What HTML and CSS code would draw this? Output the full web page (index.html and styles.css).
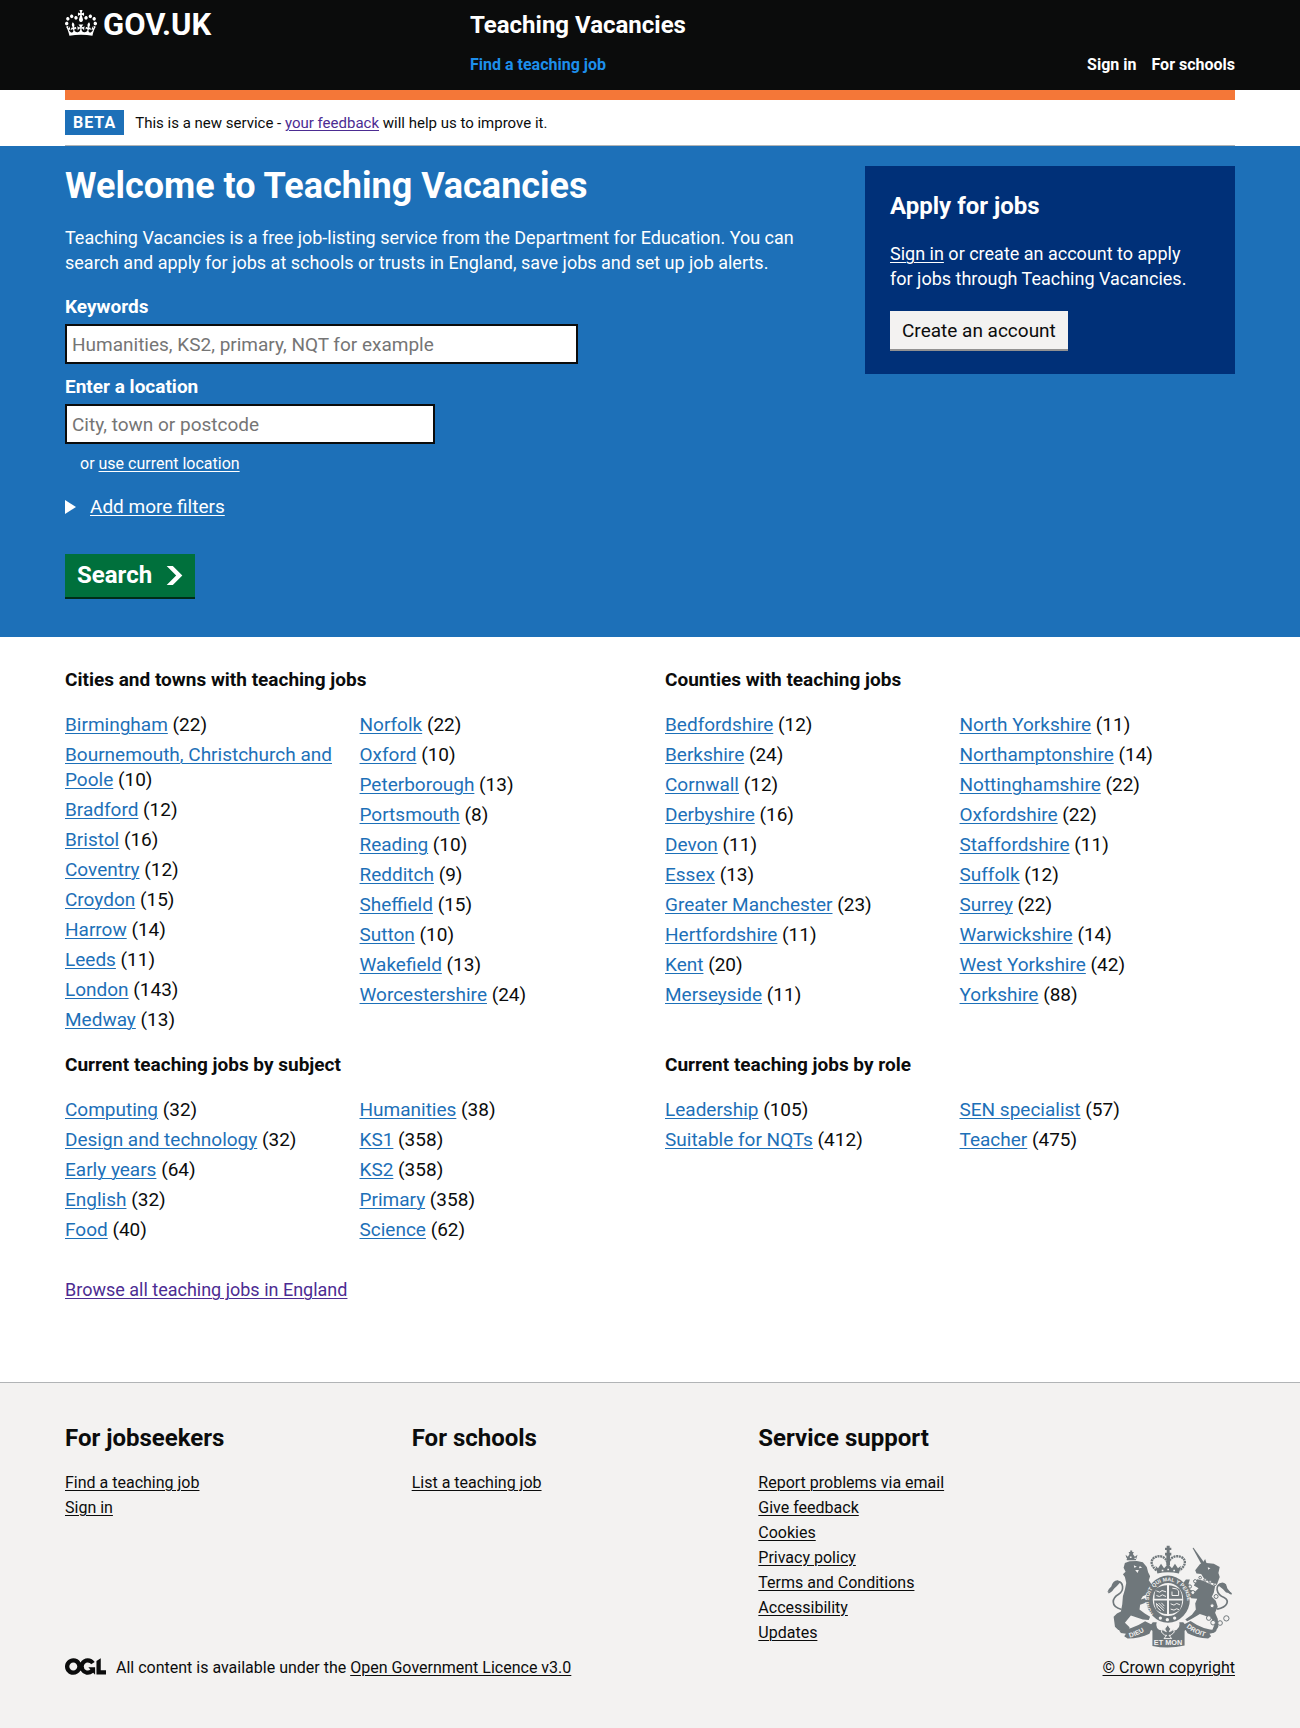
FILE: index.html
```html
<!DOCTYPE html>
<html lang="en">
<head>
<meta charset="utf-8">
<meta name="viewport" content="width=device-width, initial-scale=1">
<title>Teaching Vacancies</title>
<link rel="stylesheet" href="styles.css">
</head>
<body>
<header class="header">
  <div class="container header-grid">
    <a class="logo" href="#">
      <svg class="crown" viewBox="0 0 132 97" width="32" height="26" preserveAspectRatio="none" aria-hidden="true"><path fill="currentColor" fill-rule="evenodd" d="M25 30.2c3.5 1.5 7.7-.2 9.1-3.7 1.5-3.6-.2-7.8-3.9-9.2-3.6-1.4-7.6.3-9.1 3.9-1.4 3.5.3 7.5 3.9 9zM9 39.5c3.6 1.5 7.8-.2 9.2-3.7 1.5-3.6-.2-7.8-3.9-9.1-3.6-1.5-7.6.2-9.1 3.8-1.4 3.5.3 7.5 3.8 9zM4.4 57.2c3.5 1.5 7.7-.2 9.1-3.8 1.5-3.6-.2-7.7-3.9-9.1-3.5-1.5-7.6.3-9.1 3.8-1.4 3.5.3 7.6 3.9 9.1zm38.3-21.4c3.5 1.5 7.7-.2 9.1-3.8 1.5-3.6-.2-7.7-3.9-9.1-3.6-1.5-7.6.3-9.1 3.8-1.3 3.6.4 7.7 3.9 9.1zm64.4-5.6c-3.6 1.5-7.8-.2-9.1-3.7-1.5-3.6.2-7.8 3.8-9.2 3.6-1.4 7.7.3 9.2 3.9 1.3 3.5-.4 7.5-3.9 9zm15.9 9.3c-3.6 1.5-7.7-.2-9.1-3.7-1.5-3.6.2-7.8 3.7-9.1 3.6-1.5 7.7.2 9.2 3.8 1.5 3.5-.3 7.5-3.8 9zm4.7 17.7c-3.6 1.5-7.8-.2-9.2-3.8-1.5-3.6.2-7.7 3.9-9.1 3.6-1.5 7.7.3 9.2 3.8 1.3 3.5-.4 7.6-3.9 9.1zM89.3 35.8c-3.6 1.5-7.8-.2-9.2-3.8-1.4-3.6.2-7.7 3.9-9.1 3.6-1.5 7.7.3 9.2 3.8 1.4 3.6-.3 7.7-3.9 9.1zM69.7 17.7l8.9 4.7V9.3l-8.9 2.8c-.2-.3-.5-.6-.9-.9L72.4 0H59.6l3.5 11.2c-.3.3-.6.5-.9.9l-8.8-2.8v13.1l8.8-4.7c.3.3.6.7.9.9l-5 15.4v.1c-.2.8-.4 1.6-.4 2.4 0 4.1 3.1 7.5 7 8.1h.2c.3 0 .7.1 1 .1.4 0 .7 0 1-.1h.2c4-.6 7.1-4.1 7.1-8.1 0-.8-.1-1.7-.4-2.4V34l-5.1-15.4c.4-.2.7-.6 1-.9zM66 92.8c16.9 0 32.8 1.1 47.1 3.2 4-16.9 8.9-26.7 14-33.5l-9.6-3.4c1 4.9 1.1 7.2 0 10.2-1.5-1.4-3-4.3-4.2-8.7L108.6 76c2.8-2 5-3.2 7.5-3.3-4.4 9.4-10 11.9-13.6 11.2-4.3-.8-6.3-4.6-5.6-7.9 1-4.7 5.7-5.9 8-.5 4.3-8.7-3-11.4-7.6-8.8 7.1-7.2 7.9-13.5 2.1-21.1-8 6.1-8.1 12.3-4.5 20.8-4.7-5.4-12.1-2.5-9.5 6.2 3.4-5.2 7.9-2 7.2 3.1-.6 4.3-6.4 7.8-13.5 7.2-10.3-.9-10.9-8-11.2-13.8 2.5-.5 7.1 1.8 11 7.3L80.2 60c-4.1 4.4-8 5.3-12.3 5.4 1.4-4.4 8-11.6 8-11.6H55.5s6.4 7.2 7.9 11.6c-4.2-.1-8-1-12.3-5.4l1.4 16.4c3.9-5.5 8.5-7.7 10.9-7.3-.3 5.8-.9 12.8-11.1 13.8-7.2.6-12.9-2.9-13.5-7.2-.7-5 3.8-8.3 7.1-3.1 2.7-8.7-4.6-11.6-9.4-6.2 3.7-8.5 3.6-14.7-4.6-20.8-5.8 7.6-5 13.9 2.2 21.1-4.7-2.6-11.9.1-7.7 8.8 2.3-5.5 7.1-4.2 8.1.5.7 3.3-1.3 7.1-5.7 7.9-3.5.7-9-1.8-13.5-11.2 2.5.1 4.7 1.3 7.5 3.3l-4.7-15.4c-1.2 4.4-2.7 7.2-4.3 8.7-1.1-3-.9-5.3 0-10.2l-9.5 3.4c5 6.9 9.9 16.7 14 33.5 14.8-2.1 30.8-3.2 47.7-3.2z"/></svg>
      <span>GOV.UK</span>
    </a>
    <div class="header-content">
      <a class="service-name" href="#">Teaching Vacancies</a>
      <nav class="header-nav" aria-label="Main">
        <a class="nav-link nav-link-active" href="#">Find a teaching job</a>
        <a class="nav-link" href="#">Sign in</a>
        <a class="nav-link" href="#">For schools</a>
      </nav>
    </div>
  </div>
</header>

<div class="container">
  <div class="phase-banner">
    <strong class="phase-tag">BETA</strong>
    <span class="phase-text">This is a new service - <a class="visited" href="#">your feedback</a> will help us to improve it.</span>
  </div>
</div>

<main>
  <section class="hero">
    <div class="container hero-grid">
      <div class="hero-main">
        <h1>Welcome to Teaching Vacancies</h1>
        <p class="intro">Teaching Vacancies is a free job-listing service from the Department for Education. You can search and apply for jobs at schools or trusts in England, save jobs and set up job alerts.</p>
        <form class="search-form">
          <label for="keyword">Keywords</label>
          <input class="input input-wide" id="keyword" type="text" placeholder="Humanities, KS2, primary, NQT for example">
          <label for="location">Enter a location</label>
          <input class="input" id="location" type="text" placeholder="City, town or postcode">
          <p class="current-location">or <a href="#">use current location</a></p>
          <details class="filters">
            <summary><span>Add more filters</span></summary>
          </details>
          <button class="search-button" type="submit">Search
            <svg width="17" height="19" viewBox="0 0 33 40" aria-hidden="true"><path fill="currentColor" d="M0 0h13l20 20-20 20H0l20-20z"/></svg>
          </button>
        </form>
      </div>
      <aside class="account">
        <h2 class="heading-m">Apply for jobs</h2>
        <p><a href="#">Sign in</a> or create an account to apply for jobs through Teaching Vacancies.</p>
        <button class="secondary-button" type="button">Create an account</button>
      </aside>
    </div>
  </section>

  <div class="container listings">
    <section>
      <h2>Cities and towns with teaching jobs</h2>
      <ul class="links">
        <li><a href="#">Birmingham</a> (22)</li>
        <li><a href="#">Bournemouth, Christchurch and Poole</a> (10)</li>
        <li><a href="#">Bradford</a> (12)</li>
        <li><a href="#">Bristol</a> (16)</li>
        <li><a href="#">Coventry</a> (12)</li>
        <li><a href="#">Croydon</a> (15)</li>
        <li><a href="#">Harrow</a> (14)</li>
        <li><a href="#">Leeds</a> (11)</li>
        <li><a href="#">London</a> (143)</li>
        <li><a href="#">Medway</a> (13)</li>
        <li><a href="#">Norfolk</a> (22)</li>
        <li><a href="#">Oxford</a> (10)</li>
        <li><a href="#">Peterborough</a> (13)</li>
        <li><a href="#">Portsmouth</a> (8)</li>
        <li><a href="#">Reading</a> (10)</li>
        <li><a href="#">Redditch</a> (9)</li>
        <li><a href="#">Sheffield</a> (15)</li>
        <li><a href="#">Sutton</a> (10)</li>
        <li><a href="#">Wakefield</a> (13)</li>
        <li><a href="#">Worcestershire</a> (24)</li>
      </ul>
    </section>
    <section>
      <h2>Counties with teaching jobs</h2>
      <ul class="links">
        <li><a href="#">Bedfordshire</a> (12)</li>
        <li><a href="#">Berkshire</a> (24)</li>
        <li><a href="#">Cornwall</a> (12)</li>
        <li><a href="#">Derbyshire</a> (16)</li>
        <li><a href="#">Devon</a> (11)</li>
        <li><a href="#">Essex</a> (13)</li>
        <li><a href="#">Greater Manchester</a> (23)</li>
        <li><a href="#">Hertfordshire</a> (11)</li>
        <li><a href="#">Kent</a> (20)</li>
        <li><a href="#">Merseyside</a> (11)</li>
        <li><a href="#">North Yorkshire</a> (11)</li>
        <li><a href="#">Northamptonshire</a> (14)</li>
        <li><a href="#">Nottinghamshire</a> (22)</li>
        <li><a href="#">Oxfordshire</a> (22)</li>
        <li><a href="#">Staffordshire</a> (11)</li>
        <li><a href="#">Suffolk</a> (12)</li>
        <li><a href="#">Surrey</a> (22)</li>
        <li><a href="#">Warwickshire</a> (14)</li>
        <li><a href="#">West Yorkshire</a> (42)</li>
        <li><a href="#">Yorkshire</a> (88)</li>
      </ul>
    </section>
    <section>
      <h2>Current teaching jobs by subject</h2>
      <ul class="links">
        <li><a href="#">Computing</a> (32)</li>
        <li><a href="#">Design and technology</a> (32)</li>
        <li><a href="#">Early years</a> (64)</li>
        <li><a href="#">English</a> (32)</li>
        <li><a href="#">Food</a> (40)</li>
        <li><a href="#">Humanities</a> (38)</li>
        <li><a href="#">KS1</a> (358)</li>
        <li><a href="#">KS2</a> (358)</li>
        <li><a href="#">Primary</a> (358)</li>
        <li><a href="#">Science</a> (62)</li>
      </ul>
    </section>
    <section>
      <h2>Current teaching jobs by role</h2>
      <ul class="links">
        <li><a href="#">Leadership</a> (105)</li>
        <li><a href="#">Suitable for NQTs</a> (412)</li>
        <li><a href="#">SEN specialist</a> (57)</li>
        <li><a href="#">Teacher</a> (475)</li>
      </ul>
    </section>
  </div>
  <p class="container browse"><a class="visited" href="#">Browse all teaching jobs in England</a></p>
</main>

<footer class="footer">
  <div class="container footer-meta">
    <div class="footer-main">
      <nav class="footer-nav" aria-label="Footer">
        <div>
          <h2 class="heading-m">For jobseekers</h2>
          <ul>
            <li><a href="#">Find a teaching job</a></li>
            <li><a href="#">Sign in</a></li>
          </ul>
        </div>
        <div>
          <h2 class="heading-m">For schools</h2>
          <ul>
            <li><a href="#">List a teaching job</a></li>
          </ul>
        </div>
        <div>
          <h2 class="heading-m">Service support</h2>
          <ul>
            <li><a href="#">Report problems via email</a></li>
            <li><a href="#">Give feedback</a></li>
            <li><a href="#">Cookies</a></li>
            <li><a href="#">Privacy policy</a></li>
            <li><a href="#">Terms and Conditions</a></li>
            <li><a href="#">Accessibility</a></li>
            <li><a href="#">Updates</a></li>
          </ul>
        </div>
      </nav>
      <div class="licence">
        <svg width="41" height="17" viewBox="0 0 483.2 195.7" aria-hidden="true"><path fill="currentColor" d="M421.5 142.8V.1l-50.7 32.3v161.1h112.4v-50.7zm-122.3-9.6A47.12 47.12 0 0 1 221 97.8c0-26 21.1-47.1 47.1-47.1 16.7 0 31.4 8.7 39.7 21.8l42.7-27.2A97.63 97.63 0 0 0 268.1 0c-36.5 0-68.3 20.1-85.1 49.7A98 98 0 0 0 97.8 0C43.9 0 0 43.9 0 97.8s43.9 97.8 97.8 97.8c36.5 0 68.3-20.1 85.1-49.7a97.76 97.76 0 0 0 149.6 25.4l19.4 22.2h3v-87.8h-80l24.3 27.5zM97.8 145c-26 0-47.1-21.1-47.1-47.1s21.1-47.1 47.1-47.1 47.1 21.1 47.1 47.1S123.8 145 97.8 145"/></svg>
        <span>All content is available under the <a href="#">Open Government Licence v3.0</a></span>
      </div>
    </div>
    <a class="copyright" href="#">
      <svg class="crest" viewBox="50 46 377 310" width="125" height="103" aria-hidden="true">
        <defs>
          <path id="garter" d="M190 254A58 60 0 1 1 278 254"/>
          <path id="scroll-left" d="M119 325Q146 318 176 297"/>
          <path id="scroll-right" d="M289 294Q318 318 362 326"/>
        </defs>
        <g fill="#6f777b">
          <!-- central crown -->
          <path d="M230 48h9v6h5v7h-5v8h5v8h-19v-8h5v-8h-5v-7h5z"/>
          <path fill="none" stroke="#6f777b" stroke-width="7" stroke-dasharray="6 2" d="M199 122C170 98 190 76 213 80Q229 84 234 104Q240 84 256 80C280 76 300 98 269 122"/>
          <path d="M229 76h11v31h-11zM196 108l8 8 9-14 9 14 12-13 12 13 9-14 9 14 9-8-6 24q-34-9-65 0z"/>
          <!-- garter ring and quartered shield -->
          <path fill-rule="evenodd" d="M234 138A66 71 0 1 0 234 280A66 71 0 1 0 234 138M234 160A46 50 0 1 1 234 260A46 50 0 1 1 234 160"/>
          <path d="M197 178q16-11 34-11v41h-38q0-16 4-30zM237 167q20 2 33 13 6 12 7 28h-40zM237 213h40q-1 15-7 28-13 12-33 13zM192 213h39v41q-19-1-33-13-6-12-6-28z"/>
          <!-- lion -->
          <path d="M106 75l7 6 5-8-3-6h5v-5h6v5h5l-3 6 6 8 8-6-5 17h-27z"/>
          <path d="M104 100L118 95L140 94L158 98L170 112L174 128L180 140L176 152L184 164L176 176L178 188L168 196L158 200L152 210L164 206L176 214L178 222L166 220L150 226L148 240L164 252L180 262L176 272L158 270L140 264L122 258L112 270L104 280L118 294L116 303L84 302L74 292L70 262L80 252L92 246L96 224L98 200L104 180L108 160L104 142L98 134L106 126L100 114Z"/>
          <path fill="none" stroke="#6f777b" stroke-width="5" d="M94 240C58 230 66 205 85 194C103 184 100 156 82 156C67 158 78 180 54 190"/>
          <path d="M51 188q4-11 12-17 4-18 19-19l9 5-11 12-14 13z"/>
          <!-- unicorn -->
          <path d="M308 55l3-1 33 46-8 6z"/>
          <path d="M316 122L330 104L340 98L346 88L350 100L372 102L390 112L386 130L390 142L382 164L360 158L342 146L334 133L320 132Z"/>
          <path d="M322 149L338 153L376 170L372 190L366 202L378 214L384 232L376 250L384 268L386 292L376 308L366 306L374 286L366 268L344 258L330 254L310 266L292 276L286 270L306 256L318 240L316 222L322 208L304 206L290 192L284 176L280 160L288 150L300 150L296 162L300 180L316 186L326 176L312 168Z"/>
          <path fill="none" stroke="#6f777b" stroke-width="5" d="M382 239C415 232 420 213 403 204C378 194 374 164 397 163C414 164 402 186 426 193"/>
          <path d="M384 166q13-14 25-2l4 13 12 14-16-2-9-10z"/>
          <!-- motto scrolls -->
          <path d="M86 303q40-2 79-27l24 12-11 25q-27 13-66 15l-10-7 5-8-15-2zM381 303q-41-1-79-28l-23 12 14 25q27 14 62 16l9-7-5-8 14-3z"/>
          <path d="M174 297l14-18h12q-8 28 34 27 40 1 34-27h12l15 18-11 7v45q-50 11-97 1v-46z"/>
          <!-- fleur-de-lis -->
          <path stroke="#f3f2f1" stroke-width="3" d="M233 286l9 13-4 8 7-3 5-4 3 8-10 10h-6l8 10h-23l8-10h-6l-10-10 3-8 6 4 6 3-5-8z"/>
        </g>
        <g fill="#f3f2f1">
          <circle cx="211" cy="266" r="5"/><circle cx="232" cy="271" r="5"/><circle cx="254" cy="266" r="5"/>
          <path d="M131 107l9 4-8 3zM149 109l7 5-10 2zM135 121h11l-4 9zM106 84h4v4h-4zM119 80h5v5h-5zM133 84h4v4h-4zM354 113l8 3-7 4zM215 120h5v5h-5zM232 117h5v5h-5zM250 120h5v5h-5z"/>
        </g>
        <g fill="none" stroke="#f3f2f1" stroke-width="3">
          <path d="M199 184l10 4 7-5 12 4M199 198l9 3 9-5 11 5M242 223l10 4 8-5 10 4M242 239l10 3 8-4 8 3M247 176q15 0 19 8v14h-20v-12M199 222l23 22M206 221l16 16M214 220l9 10M199 222q-1 14 13 22"/>
        </g>
        <g fill="#f3f2f1" stroke="#6f777b" stroke-width="3">
          <circle cx="316" cy="155" r="5"/><circle cx="331" cy="144" r="4"/><circle cx="346" cy="151" r="4"/><circle cx="361" cy="157" r="4"/><circle cx="376" cy="164" r="4"/>
          <circle cx="300" cy="171" r="5"/><circle cx="309" cy="189" r="6"/><circle cx="379" cy="201" r="6"/><circle cx="367" cy="229" r="6"/><circle cx="357" cy="266" r="7"/><circle cx="370" cy="280" r="7"/><circle cx="391" cy="281" r="7"/><circle cx="410" cy="267" r="8"/>
        </g>
        <g class="motto" fill="#f3f2f1">
          <text font-size="16"><textPath href="#garter">HONI SOIT QUI MAL Y PENSE</textPath></text>
          <text font-size="20"><textPath href="#scroll-left">DIEU</textPath></text>
          <text font-size="20"><textPath href="#scroll-right">DROIT</textPath></text>
          <text x="234" y="346" font-size="22" text-anchor="middle">ET MON</text>
        </g>
      </svg>
      <span>© Crown copyright</span>
    </a>
  </div>
</footer>
</body>
</html>
```
FILE: styles.css
```css
*, *::before, *::after { box-sizing: border-box; }

body {
  margin: 0;
  background: #fff;
  color: #0b0c0c;
  font-family: Roboto, "Liberation Sans", sans-serif;
  font-size: 19px;
  line-height: 25px;
}

h1, h2, p, ul { margin: 0; }
ul { padding: 0; list-style: none; }
h2 { font-size: 19px; line-height: 25px; }
a { color: #1d70b8; text-underline-offset: 2px; text-decoration-thickness: 1px; }
a.visited { color: #4c2c92; }
button, input { font: inherit; }

.container { max-width: 1200px; margin: 0 auto; width: 90%; }
.heading-m { font-size: 24px; line-height: 30px; }

/* Header */
.header { background: #0b0c0c; color: #fff; }
.header a { color: #fff; text-decoration: none; font-weight: 700; }
.header-grid {
  display: grid;
  grid-template-columns: minmax(200px, 405px) 1fr;
  padding: 10px 0 15px;
  align-items: start;
}
.logo { display: flex; align-items: center; gap: 6px; font-size: 31px; line-height: 28px; }
.crown { margin-bottom: 4px; }
.header-content { display: grid; gap: 15px; }
.service-name { font-size: 24px; line-height: 30px; }
.header-nav { display: flex; gap: 15px; font-size: 16px; line-height: 20px; }
.header .nav-link-active { color: #1d8feb; margin-right: auto; }

/* Phase banner */
.phase-banner {
  display: flex;
  align-items: center;
  gap: 11px;
  padding: 10px 0;
  border-top: 10px solid #f47738;
  border-bottom: 1px solid #b1b4b6;
  font-size: 16px;
  line-height: 20px;
}
.phase-text { font-size: 15px; }
.phase-tag {
  padding: 3px 8px 2px;
  background: #1d70b8;
  color: #fff;
  letter-spacing: 1px;
}

/* Hero */
.hero { background: #1d70b8; color: #fff; padding: 20px 0 40px; }
.hero a { color: inherit; }
.hero-grid {
  display: grid;
  grid-template-columns: minmax(0, 770fr) minmax(0, 370fr);
  gap: 30px;
  align-items: start;
}
.hero h1 { font-size: 36px; line-height: 40px; margin-bottom: 19px; }
.intro, .account p { font-size: 18px; }
.intro { margin-bottom: 19px; }
.search-form { display: flex; flex-direction: column; align-items: flex-start; }
.search-form label { font-weight: 700; margin-bottom: 5px; }
.input {
  width: 48%;
  height: 40px;
  margin-bottom: 10px;
  padding: 5px;
  border: 2px solid #0b0c0c;
  border-radius: 0;
  background: #fff;
  color: #0b0c0c;
}
.input-wide { width: 66.67%; }
.input::placeholder { color: #757575; opacity: 1; }
.current-location { padding-left: 15px; font-size: 16px; line-height: 20px; margin-bottom: 20px; }
.filters { margin-bottom: 35px; }
.filters summary { display: flex; align-items: center; gap: 14px; cursor: pointer; list-style: none; }
.filters summary::before {
  content: "";
  border-left: 11px solid #fff;
  border-top: 7px solid transparent;
  border-bottom: 7px solid transparent;
}
.filters span { text-decoration: underline; text-decoration-thickness: 1px; text-underline-offset: 2px; }
.search-button {
  display: flex;
  align-items: center;
  gap: 14px;
  height: 43px;
  padding: 0 12px;
  border: 0;
  background: #00703c;
  box-shadow: 0 2px 0 #002d18;
  color: #fff;
  font-size: 24px;
  font-weight: 700;
}
.account { padding: 25px; background: #003078; }
.account h2, .account p { margin-bottom: 20px; }
.account p { padding-right: 20px; }
.secondary-button {
  display: block;
  height: 38px;
  padding: 0 12px;
  border: 0;
  background: #f3f2f1;
  box-shadow: 0 2px 0 #929191;
  color: #0b0c0c;
}

/* Listings */
.listings {
  display: grid;
  grid-template-columns: repeat(2, minmax(0, 1fr));
  gap: 15px 30px;
  padding-top: 30px;
}
.listings h2 { margin-bottom: 20px; }
.links { columns: 2; column-gap: 19px; }
.links li { padding-bottom: 5px; break-inside: avoid; }
.browse { padding: 30px 0 80px; font-size: 18px; }

/* Footer */
.footer { border-top: 1px solid #b1b4b6; background: #f3f2f1; padding: 40px 0 50px; font-size: 16px; }
.footer a { color: inherit; }
.footer-meta { display: flex; gap: 30px; align-items: flex-end; }
.footer-main { flex: 1; }
.footer-nav { display: grid; grid-template-columns: repeat(3, minmax(0, 1fr)); gap: 30px; margin-bottom: 10px; }
.footer-nav h2 { margin-bottom: 17px; }
.licence { display: flex; gap: 10px; line-height: 25px; }
.licence svg { margin-top: 3px; }
.copyright {
  flex: none;
  display: flex;
  flex-direction: column;
  align-items: flex-end;
  gap: 7px;
  width: 130px;
  white-space: nowrap;
}
.crest { margin-right: 3px; }
.motto { font-family: "Liberation Sans", sans-serif; font-weight: 700; }
```
